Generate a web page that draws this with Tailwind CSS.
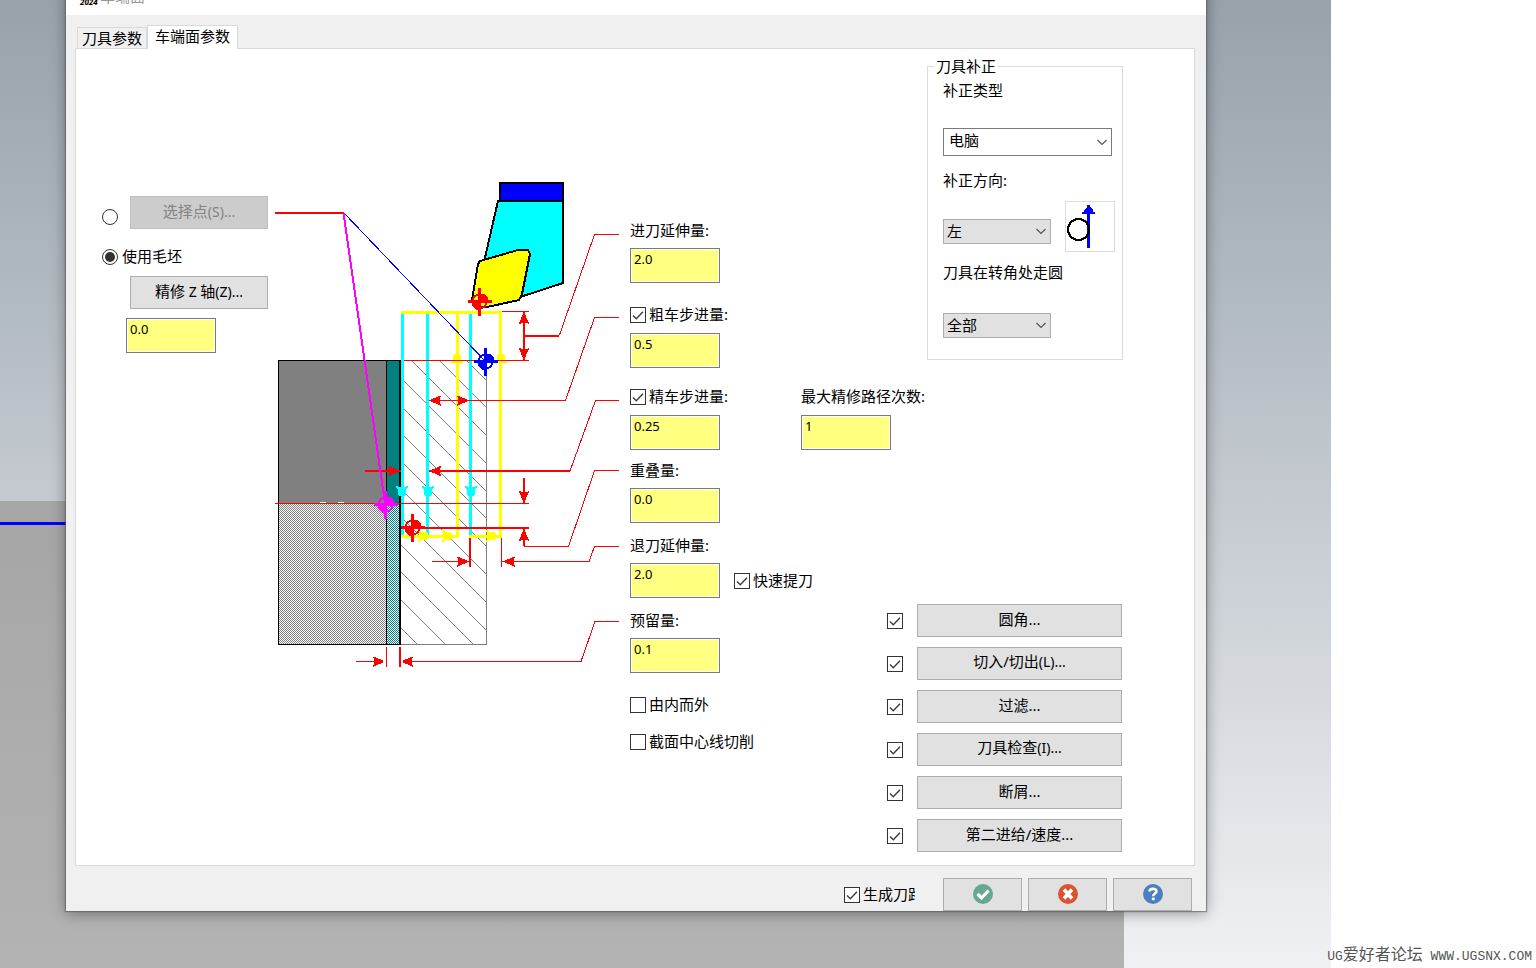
<!DOCTYPE html>
<html lang="zh-CN">
<head>
  <meta charset="UTF-8">
  <title>车端面</title>
  <script src="https://cdn.jsdelivr.net/npm/@tailwindcss/browser@4"></script>
</head>
<body class="relative flex min-h-screen bg-white font-['Noto_Sans','Noto_Sans_CJK_SC',sans-serif] text-[15px] leading-5 text-black">

  <!-- Shared shapes -->
  <svg class="hidden">
    <symbol id="tick" viewBox="0 0 16 16"><path d="M3 8.5 6.3 11.8 13 4.8" fill="none" stroke="#3c3c3c" stroke-width="1.4"/></symbol>
    <symbol id="chevron" viewBox="0 0 12 12"><path d="M1.5 4 6 8.5 10.500 4" fill="none" stroke="#555" stroke-width="1.2"/></symbol>
  </svg>

  <!-- Desktop -->
  <div class="relative flex min-w-0 flex-1 items-start overflow-hidden bg-linear-to-b from-[#97a2ab] to-[#f0f1f4] pr-[125px] pl-[66px]">
    <div class="absolute top-[501px] right-[207px] bottom-0 left-0 bg-linear-to-b from-[#a6a6a6] to-[#b2b3b2]"></div>
    <div class="absolute top-[522px] left-0 h-[3px] w-20 bg-[#0000ff]"></div>

    <!-- Dialog -->
    <main class="relative -mt-5 min-w-0 flex-1 bg-[#f0f0f0] shadow-[0_0_1px_1px_rgba(90,90,90,0.6),0_2px_14px_rgba(0,0,0,0.4)]">
      <header class="flex h-[35px] items-center bg-white pr-4 pb-1 pl-3.5 text-[#999]">
        <span class="w-5 text-[8px] font-bold text-black italic"><span class="block leading-3">&nbsp;</span>2024</span>
        <h1 class="flex-1">车端面</h1>
        <button aria-label="关闭">
          <svg class="size-3" viewBox="0 0 12 12"><path d="M1 0 11 10M11 0 1 10" stroke="#888"/></svg>
        </button>
      </header>

      <nav class="flex h-[33px] items-end pl-[11px]" role="tablist">
        <button role="tab" class="h-[21px] border border-b-0 border-[#d9d9d9] bg-[#f0f0f0] px-1 pb-0.5">刀具参数</button>
        <button role="tab" aria-selected="true" class="relative -mb-px h-6 border border-b-0 border-[#d9d9d9] bg-white px-[7px] pb-1">车端面参数</button>
      </nav>

      <section class="mr-[11px] ml-[9px] flex border border-[#d9d9d9] bg-white pr-[71px] pb-[13px] pl-[26px]">

        <!-- Reference point -->
        <div class="w-[173px] shrink-0 pt-[147px]">
          <div class="flex items-center gap-3">
            <span class="relative mt-2 flex size-4 shrink-0">
              <input type="radio" name="ref" aria-label="选择点" class="peer size-4 appearance-none rounded-full border border-[#333] bg-white">
              <span class="pointer-events-none absolute inset-[3px] hidden rounded-full bg-[#333] peer-checked:block"></span>
            </span>
            <button disabled class="h-[33px] w-[138px] border border-[#bfbfbf] bg-[#ccc] pb-0.5 text-[#838383]">选择点<span class="text-sm">(S)...</span></button>
          </div>
          <div class="mt-5 flex h-4 items-center gap-1">
            <span class="relative flex size-4 shrink-0">
              <input id="stock" type="radio" name="ref" checked class="peer size-4 appearance-none rounded-full border border-[#333] bg-white">
              <span class="pointer-events-none absolute inset-[3px] hidden rounded-full bg-[#333] peer-checked:block"></span>
            </span>
            <label for="stock" class="pb-0.5">使用毛坯</label>
          </div>
          <button class="mt-[11px] ml-7 block h-[33px] w-[138px] border border-[#adadad] bg-[#e1e1e1] pb-0.5">精修<span class="text-sm"> Z </span>轴<span class="text-sm">(Z)...</span></button>
          <input aria-label="精修 Z 轴" value="0.0" class="mt-[9px] ml-6 block h-[35px] w-[90px] border border-[#7a7a7a] bg-[#ffff80] pb-[13px] pl-[3px] text-[13px] shadow-[inset_0_0_0_1px_#fff]">
        </div>

        <!-- Facing diagram -->
        <svg class="mt-[131px] h-[490px] w-[345px] shrink-0" viewBox="275 180 345 490" shape-rendering="crispEdges" fill="none">
          <defs>
            <pattern id="gray-dots" width="2" height="2" patternUnits="userSpaceOnUse"><rect width="1" height="1" fill="#808080"/><rect x="1" y="1" width="1" height="1" fill="#808080"/></pattern>
            <pattern id="teal-dots" width="2" height="2" patternUnits="userSpaceOnUse"><rect width="1" height="1" fill="#008080"/><rect x="1" y="1" width="1" height="1" fill="#008080"/></pattern>
            <clipPath id="stock-area"><rect x="401" y="361" width="86" height="284"/></clipPath>
            <!-- arrow heads point right, tip at 0,0 -->
            <path id="head" d="M1 -1 -1 -2 -4 -3 -6 -4 -8 -5H-9V-4L-8 -3V3L-9 4V5H-8L-6 4 -4 3 -1 2 1 1Z"/>
            <path id="path-head" d="M0 -3V3L-2 4H-7L-8 6H-10V4H-9V-4H-10V-6H-8L-7 -4H-2Z"/>
            <g id="target"><circle r="7" stroke="currentColor" stroke-width="2"/><path d="M0 0V-8H4L8 -4V0ZM0 0V8H-4L-8 4V0Z" fill="currentColor"/><path d="M-12 0H12M0 -14V14" stroke="currentColor" stroke-width="3"/></g>
          </defs>

          <!-- part -->
          <rect x="278.500" y="360.500" width="108" height="143" fill="#808080"/>
          <rect x="387" y="361" width="13" height="143" fill="#008080"/>
          <rect x="279" y="504" width="108" height="140" fill="url(#gray-dots)"/>
          <rect x="387" y="504" width="13" height="140" fill="url(#teal-dots)"/>
          <path d="M400 360.500H278.500V644.500H400M386.500 361V644" stroke="#000"/>
          <path d="M400 360V645" stroke="#000" stroke-width="2"/>

          <!-- stock hatching -->
          <g clip-path="url(#stock-area)" stroke="#808080">
            <path d="M401 295l90 90M401 322l90 90M401 350l90 90M401 378l90 90M401 406l90 90M401 433l90 90M401 461l90 90M401 489l90 90M401 517l90 90M401 545l90 90M401 572l90 90M401 600l90 90M401 628l90 90"/>
          </g>
          <path d="M486.500 360V644.500H401" stroke="#808080"/>

          <!-- tool -->
          <path d="M498 201H563V283L520 297 484 262Z" fill="#00ffff" stroke="#000" stroke-width="2"/>
          <rect x="500" y="183" width="63" height="18" fill="#0000ff" stroke="#000" stroke-width="2"/>
          <path d="M480 261 518 250H528L530 254 522 294 519 300 487 307H477L472 300 478 264Z" fill="#ffff00" stroke="#000" stroke-width="2"/>

          <!-- cutting passes -->
          <path d="M402.500 313V535M427.500 313V535M470.500 313V535" stroke="#00ffff" stroke-width="3"/>
          <path d="M401 312.500H502M457.500 311V538M500.500 311V538M401 536.500H459M469 536.500H502" stroke="#ffff00" stroke-width="3"/>
          <g fill="#00ffff">
            <use href="#path-head" transform="translate(402 496) rotate(90)"/>
            <use href="#path-head" transform="translate(428 496) rotate(90)"/>
            <use href="#path-head" transform="translate(471 496) rotate(90)"/>
          </g>
          <g fill="#ffff00">
            <use href="#path-head" transform="translate(457 354) rotate(-90)"/>
            <use href="#path-head" transform="translate(501 354) rotate(-90)"/>
            <use href="#path-head" transform="translate(428 536)"/>
            <use href="#path-head" transform="translate(452 536)"/>
            <use href="#path-head" transform="translate(496 536)"/>
          </g>

          <!-- dimension lines -->
          <g stroke="#ff0000">
            <path d="M404 360.500H529M502 311.500H529M559.500 335 594.500 234.500H619"/>
            <path d="M429 400.500H565.500L594.500 317.500H619"/>
            <path d="M570 471 595.500 400.500H619"/>
            <path d="M275 503.500H529M524 546.500H568.500L594.500 470.500H619"/>
            <path d="M432 561.500H469M502 561.500H589L594.500 546.500H619M501.500 538V567"/>
            <path d="M356 661.500H382M404 661.500H581L595 621.500H619M386.500 647V667"/>
            <path stroke-width="2" d="M275 213H344M524 312V361M524 336H559M365 471H401M429 471H570M524 478V503M401 528H529M524 529V546M470 538V567M400 647V667"/>
          </g>
          <g fill="#ff0000">
            <use href="#head" transform="translate(524 315) rotate(-90)"/>
            <use href="#head" transform="translate(524 357) rotate(90)"/>
            <use href="#head" transform="translate(432 400.500) rotate(180)"/>
            <use href="#head" transform="translate(466 400.500)"/>
            <use href="#head" transform="translate(397 471)"/>
            <use href="#head" transform="translate(432 471) rotate(180)"/>
            <use href="#head" transform="translate(524 500) rotate(90)"/>
            <use href="#head" transform="translate(524 532) rotate(-90)"/>
            <use href="#head" transform="translate(466 561.500)"/>
            <use href="#head" transform="translate(506 561.500) rotate(180)"/>
            <use href="#head" transform="translate(382 661.500)"/>
            <use href="#head" transform="translate(404 661.500) rotate(180)"/>
          </g>
          <path d="M320 502.500H326M338 502.500H344" stroke="#fff"/>

          <!-- reference points -->
          <path d="M344 213 485 361" stroke="#0000ff"/>
          <path d="M343.500 213 385 503" stroke="#ff00ff" stroke-width="2"/>
          <use href="#target" class="text-[#ff0000]" transform="translate(479.500 301.500)"/>
          <use href="#target" class="text-[#0000ff]" transform="translate(485.500 361.500)"/>
          <use href="#target" class="text-[#ff00ff]" transform="translate(385.500 504.500)"/>
          <use href="#target" class="text-[#ff0000]" transform="translate(412.500 527.500)"/>
        </svg>

        <!-- Cut amounts -->
        <div class="min-w-0 flex-1 pt-[171px] pl-2.5 whitespace-nowrap">
          <div>
            <label for="entry" class="flex h-5 items-center">进刀延伸量:</label>
            <input id="entry" value="2.0" class="mt-2 block h-[35px] w-[90px] border border-[#7a7a7a] bg-[#ffff80] pb-[13px] pl-[3px] text-[13px] shadow-[inset_0_0_0_1px_#fff]">
          </div>
          <div class="mt-[22px]">
            <div class="flex h-5 items-center gap-[3px]">
              <span class="relative flex size-4 shrink-0">
                <input id="rough" type="checkbox" checked class="peer size-4 appearance-none border border-[#333] bg-white">
                <svg class="pointer-events-none absolute inset-0 hidden size-4 peer-checked:block"><use href="#tick"/></svg>
              </span>
              <label for="rough" class="pb-0.5">粗车步进量:</label>
            </div>
            <input aria-label="粗车步进量" value="0.5" class="mt-2 block h-[35px] w-[90px] border border-[#7a7a7a] bg-[#ffff80] pb-[13px] pl-[3px] text-[13px] shadow-[inset_0_0_0_1px_#fff]">
          </div>
          <div class="mt-[19px] flex">
            <div class="w-[171px] shrink-0">
              <div class="flex h-5 items-center gap-[3px]">
                <span class="relative flex size-4 shrink-0">
                  <input id="finish" type="checkbox" checked class="peer size-4 appearance-none border border-[#333] bg-white">
                  <svg class="pointer-events-none absolute inset-0 hidden size-4 peer-checked:block"><use href="#tick"/></svg>
                </span>
                <label for="finish" class="pb-0.5">精车步进量:</label>
              </div>
              <input aria-label="精车步进量" value="0.25" class="mt-2 block h-[35px] w-[90px] border border-[#7a7a7a] bg-[#ffff80] pb-[13px] pl-[3px] text-[13px] shadow-[inset_0_0_0_1px_#fff]">
            </div>
            <div>
              <label for="passes" class="flex h-5 items-center pb-0.5">最大精修路径次数:</label>
              <input id="passes" value="1" class="mt-2 block h-[35px] w-[90px] border border-[#7a7a7a] bg-[#ffff80] pb-[13px] pl-[3px] text-[13px] shadow-[inset_0_0_0_1px_#fff]">
            </div>
          </div>
          <div class="mt-2.5">
            <label for="overlap" class="flex h-5 items-center">重叠量:</label>
            <input id="overlap" value="0.0" class="mt-2 block h-[35px] w-[90px] border border-[#7a7a7a] bg-[#ffff80] pb-[13px] pl-[3px] text-[13px] shadow-[inset_0_0_0_1px_#fff]">
          </div>
          <div class="mt-3">
            <label for="retract" class="flex h-5 items-center">退刀延伸量:</label>
            <div class="mt-2 flex items-center gap-3.5">
              <input id="retract" value="2.0" class="block h-[35px] w-[90px] border border-[#7a7a7a] bg-[#ffff80] pb-[13px] pl-[3px] text-[13px] shadow-[inset_0_0_0_1px_#fff]">
              <div class="flex items-center gap-[3px]">
                <span class="relative flex size-4 shrink-0">
                  <input id="rapid" type="checkbox" checked class="peer size-4 appearance-none border border-[#333] bg-white">
                  <svg class="pointer-events-none absolute inset-0 hidden size-4 peer-checked:block"><use href="#tick"/></svg>
                </span>
                <label for="rapid" class="pb-0.5">快速提刀</label>
              </div>
            </div>
          </div>
          <div class="mt-3">
            <label for="leave" class="flex h-5 items-center">预留量:</label>
            <input id="leave" value="0.1" class="mt-2 block h-[35px] w-[90px] border border-[#7a7a7a] bg-[#ffff80] pb-[13px] pl-[3px] text-[13px] shadow-[inset_0_0_0_1px_#fff]">
          </div>
          <div class="mt-[22px] flex h-5 items-center gap-[3px]">
            <span class="relative flex size-4 shrink-0">
              <input id="outward" type="checkbox" class="peer size-4 appearance-none border border-[#333] bg-white">
              <svg class="pointer-events-none absolute inset-0 hidden size-4 peer-checked:block"><use href="#tick"/></svg>
            </span>
            <label for="outward" class="pb-0.5">由内而外</label>
          </div>
          <div class="mt-[17px] flex h-5 items-center gap-[3px]">
            <span class="relative flex size-4 shrink-0">
              <input id="centerline" type="checkbox" class="peer size-4 appearance-none border border-[#333] bg-white">
              <svg class="pointer-events-none absolute inset-0 hidden size-4 peer-checked:block"><use href="#tick"/></svg>
            </span>
            <label for="centerline" class="pb-0.5">截面中心线切削</label>
          </div>
        </div>

        <div class="w-[236px] shrink-0 pt-[7px]">
          <!-- Tool compensation -->
          <fieldset class="ml-10 border border-[#dcdcdc] pr-[7px] pb-[21px] pl-[15px]">
            <legend class="-ml-[9px] px-0.5">刀具补正</legend>
            <label for="comp-type" class="mt-1 block">补正类型</label>
            <div class="relative mt-7 w-[169px]">
              <select id="comp-type" class="block h-7 w-full appearance-none border border-[#7a7a7a] bg-white pb-1 pl-[5px]"><option>电脑</option></select>
              <svg class="pointer-events-none absolute top-2 right-1 size-3"><use href="#chevron"/></svg>
            </div>
            <label for="comp-dir" class="mt-3.5 block">补正方向:</label>
            <div class="mt-[11px] flex items-center gap-3.5">
              <div class="relative mt-2.5 w-[108px]">
                <select id="comp-dir" class="block h-[25px] w-full appearance-none border border-[#adadad] bg-[#e1e1e1] pb-0.5 pl-[3px]"><option>左</option></select>
                <svg class="pointer-events-none absolute top-1.5 right-1 size-3"><use href="#chevron"/></svg>
              </div>
              <svg class="h-[51px] w-[50px] border border-[#dcdcdc]" viewBox="0 0 48 49" shape-rendering="crispEdges">
                <path d="M22.500 9V46" stroke="#0000ff" stroke-width="3"/>
                <path d="M21 3H24V5L27 8V10H29V12H16V10H18V8L21 5Z" fill="#0000ff"/>
                <circle cx="12.500" cy="27.500" r="10.500" fill="none" stroke="#000" stroke-width="2"/>
              </svg>
            </div>
            <label for="corner" class="mt-2.5 block">刀具在转角处走圆</label>
            <div class="relative mt-[31px] w-[108px]">
              <select id="corner" class="block h-[25px] w-full appearance-none border border-[#adadad] bg-[#e1e1e1] pb-0.5 pl-[3px]"><option>全部</option></select>
              <svg class="pointer-events-none absolute top-1.5 right-1 size-3"><use href="#chevron"/></svg>
            </div>
          </fieldset>

          <!-- Options -->
          <div class="mt-[244px] flex flex-col gap-2.5 pr-px">
            <div class="flex items-center gap-3.5">
              <span class="relative flex size-4 shrink-0">
                <input type="checkbox" checked aria-label="圆角" class="peer size-4 appearance-none border border-[#333] bg-white">
                <svg class="pointer-events-none absolute inset-0 hidden size-4 peer-checked:block"><use href="#tick"/></svg>
              </span>
              <button class="h-[33px] flex-1 border border-[#adadad] bg-[#e1e1e1] pb-1">圆角...</button>
            </div>
            <div class="flex items-center gap-3.5">
              <span class="relative flex size-4 shrink-0">
                <input type="checkbox" checked aria-label="切入/切出" class="peer size-4 appearance-none border border-[#333] bg-white">
                <svg class="pointer-events-none absolute inset-0 hidden size-4 peer-checked:block"><use href="#tick"/></svg>
              </span>
              <button class="h-[33px] flex-1 border border-[#adadad] bg-[#e1e1e1] pb-1">切入/切出<span class="text-sm">(L)...</span></button>
            </div>
            <div class="flex items-center gap-3.5">
              <span class="relative flex size-4 shrink-0">
                <input type="checkbox" checked aria-label="过滤" class="peer size-4 appearance-none border border-[#333] bg-white">
                <svg class="pointer-events-none absolute inset-0 hidden size-4 peer-checked:block"><use href="#tick"/></svg>
              </span>
              <button class="h-[33px] flex-1 border border-[#adadad] bg-[#e1e1e1] pb-1">过滤...</button>
            </div>
            <div class="flex items-center gap-3.5">
              <span class="relative flex size-4 shrink-0">
                <input type="checkbox" checked aria-label="刀具检查" class="peer size-4 appearance-none border border-[#333] bg-white">
                <svg class="pointer-events-none absolute inset-0 hidden size-4 peer-checked:block"><use href="#tick"/></svg>
              </span>
              <button class="h-[33px] flex-1 border border-[#adadad] bg-[#e1e1e1] pb-1">刀具检查<span class="text-sm">(I)...</span></button>
            </div>
            <div class="flex items-center gap-3.5">
              <span class="relative flex size-4 shrink-0">
                <input type="checkbox" checked aria-label="断屑" class="peer size-4 appearance-none border border-[#333] bg-white">
                <svg class="pointer-events-none absolute inset-0 hidden size-4 peer-checked:block"><use href="#tick"/></svg>
              </span>
              <button class="h-[33px] flex-1 border border-[#adadad] bg-[#e1e1e1] pb-1">断屑...</button>
            </div>
            <div class="flex items-center gap-3.5">
              <span class="relative flex size-4 shrink-0">
                <input type="checkbox" checked aria-label="第二进给/速度" class="peer size-4 appearance-none border border-[#333] bg-white">
                <svg class="pointer-events-none absolute inset-0 hidden size-4 peer-checked:block"><use href="#tick"/></svg>
              </span>
              <button class="h-[33px] flex-1 border border-[#adadad] bg-[#e1e1e1] pb-1">第二进给/速度...</button>
            </div>
          </div>
        </div>
      </section>

      <footer class="flex items-center justify-end gap-1.5 pt-3 pr-3.5">
        <div class="mr-[22px] flex w-[71px] items-center gap-[3px] overflow-hidden whitespace-nowrap">
          <span class="relative flex size-4 shrink-0">
            <input id="toolpath" type="checkbox" checked class="peer size-4 appearance-none border border-[#333] bg-white">
            <svg class="pointer-events-none absolute inset-0 hidden size-4 peer-checked:block"><use href="#tick"/></svg>
          </span>
          <label for="toolpath" class="pb-0.5">生成刀路</label>
        </div>
        <button aria-label="确定" class="flex h-[33px] w-[79px] items-center justify-center border border-[#adadad] bg-[#e1e1e1] pb-px">
          <svg class="size-5" viewBox="0 0 20 20"><circle cx="10" cy="10" r="10" fill="#67a690"/><path d="M4.500 10 8.500 14 15.500 6.500" fill="none" stroke="#fff" stroke-width="3.200"/></svg>
        </button>
        <button aria-label="取消" class="flex h-[33px] w-[79px] items-center justify-center border border-[#adadad] bg-[#e1e1e1] pb-px">
          <svg class="size-5" viewBox="0 0 20 20"><circle cx="10" cy="10" r="10" fill="#d95532"/><path d="M6 5.500 14 14.500M14 5.500 6 14.500" stroke="#fff" stroke-width="3.600"/></svg>
        </button>
        <button aria-label="帮助" class="flex h-[33px] w-[79px] items-center justify-center border border-[#adadad] bg-[#e1e1e1] pb-px">
          <svg class="size-5" viewBox="0 0 20 20"><circle cx="10" cy="10" r="10" fill="#4a80bd"/><path d="M6.500 7.500C6.500 4 13.500 4 13.500 7.300 13.500 9.600 10.200 9.400 10.200 12.200" fill="none" stroke="#fff" stroke-width="2.600"/><path d="M8.800 13.600H11.700V16.200H8.800Z" fill="#fff"/></svg>
        </button>
      </footer>
    </main>
  </div>

  <div class="w-[205px] shrink-0"></div>
  <p class="absolute right-1 bottom-0 font-['Liberation_Mono','Noto_Sans_CJK_SC',monospace] text-[13px] text-[#555]">UG<span class="text-base">爱好者论坛</span> WWW.UGSNX.COM</p>
</body>
</html>
